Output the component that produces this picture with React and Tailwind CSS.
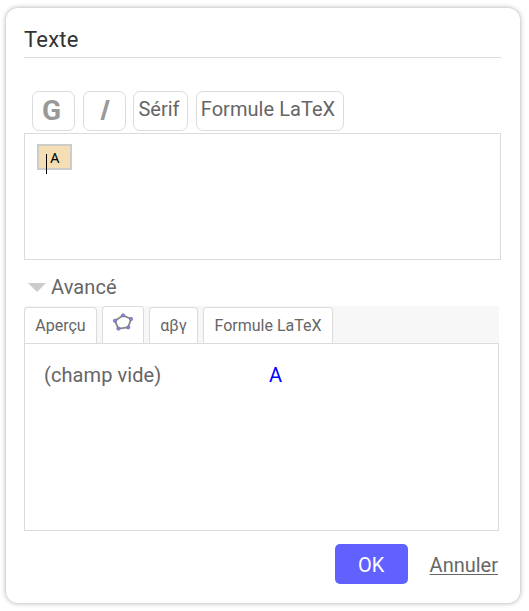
const toolButton =
  "flex h-10 items-center justify-center rounded-[7px] border border-[#dcdcdc] bg-white whitespace-nowrap";
const tab =
  "flex items-center justify-center rounded-t border border-b-0 border-[#dcdcdc] bg-white text-base whitespace-nowrap";

function PolygonIcon() {
  return (
    <svg width="22" height="20" viewBox="0 0 22 20" aria-hidden="true">
      <path d="M11 2.4 L19 6 L16.2 14.4 L6.4 15.6 L3 7.8 Z" fill="none" stroke="#888888" strokeWidth="1.8" strokeLinejoin="round" />
      <g fill="#8383e0" stroke="#6c6c9c" strokeWidth="0.6">
        <circle cx="11" cy="2.4" r="1.7" />
        <circle cx="19" cy="6" r="1.7" />
        <circle cx="16.2" cy="14.4" r="1.7" />
        <circle cx="6.4" cy="15.6" r="1.7" />
        <circle cx="3" cy="7.8" r="1.7" />
      </g>
    </svg>
  );
}

export default function App() {
  return (
    <div className="h-[611px] w-[529px] overflow-hidden bg-white pt-2 pl-1.5 font-[Roboto,sans-serif] text-[#666666]">
      <div className="flex h-[595px] w-[514px] flex-col rounded-[12px] bg-white pt-[18px] pl-[18px] shadow-[0_0_5px_0px_rgba(0,0,0,0.35)]">
        <h1 className="h-8 w-[477px] border-b border-[#dcdcdc] text-[22px] leading-[27px] tracking-[0.2px] text-[#333333]">Texte</h1>

        <div className="mt-[33px] flex pl-2 text-xl">
          <button className={`${toolButton} w-[43px] pr-1 text-[28px] font-bold text-[#999999]`}>G</button>
          <button className={`${toolButton} ml-2 w-[43px] text-[#999999]`}>
            <span className="-skew-x-[16deg] text-[28px] font-medium">I</span>
          </button>
          <button className={`${toolButton} ml-[7px] w-[55px] pr-[3px] pb-1`}>Sérif</button>
          <button className={`${toolButton} ml-2 w-[148px] pr-1 pb-1 tracking-[0.05px]`}>Formule LaTeX</button>
        </div>

        <div className="mt-0.5 h-[127px] w-[477px] border border-[#dcdcdc] pt-2.5 pl-3">
          <div className="flex h-[26px] w-[35px] items-start border-2 border-[#cccccc] bg-[#f5deb3] pl-[7px] text-base text-black">
            <span className="mt-2 h-5 w-px shrink-0 bg-black" />
            <span className="ml-[3px] scale-x-95 font-['Noto_Sans',sans-serif] text-[15px] leading-[22px]">A</span>
          </div>
        </div>

        <div className="flex h-[46px] items-center pt-2 pl-1 text-xl">
          <svg width="18" height="9" viewBox="0 0 18 9" aria-hidden="true">
            <path d="M0 0H18L9 9Z" fill="#cccccc" />
          </svg>
          <span className="ml-[5px] tracking-[0.1px]">Avancé</span>
        </div>

        <div className="flex h-[37px] w-[475px] items-end gap-[5px] bg-[#f7f7f7]">
          <div className={`${tab} h-9 w-[73px]`}>Aperçu</div>
          <div className={`${tab} h-[37px] w-[42px] pb-1`}>
            <PolygonIcon />
          </div>
          <div className={`${tab} h-9 w-[49px]`}>αβγ</div>
          <div className={`${tab} h-9 w-[130px]`}>Formule LaTeX</div>
        </div>
        <div className="flex h-[188px] w-[475px] border border-[#dcdcdc] pt-[17px] pl-[19px] text-xl leading-7">
          <span className="w-[225px] tracking-[0.08px]">(champ vide)</span>
          <span className="text-[#0000ff]">A</span>
        </div>

        <div className="mt-[13px] flex w-[474px] items-center justify-end">
          <button className="h-10 w-[73px] rounded-[5px] bg-[#6161ff] pt-0.5 text-xl text-white">OK</button>
          <button className="ml-[22px] pt-0.5 text-xl underline decoration-1 underline-offset-2">Annuler</button>
        </div>
      </div>
    </div>
  );
}
